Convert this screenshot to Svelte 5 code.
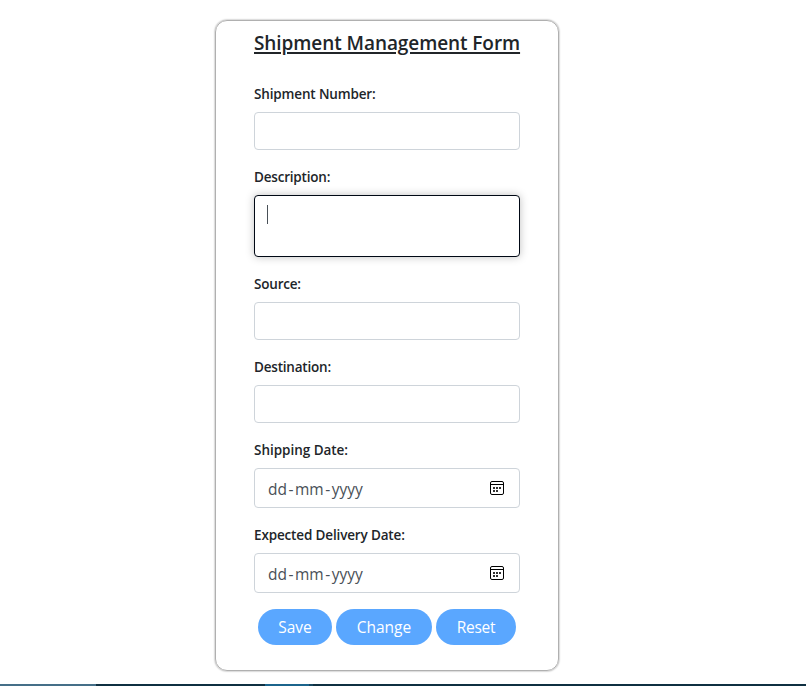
<script>
  const fields = [
    { id: 'number', label: 'Shipment Number:', type: 'text', track: -0.15 },
    { id: 'description', label: 'Description:', type: 'area', track: -0.2 },
    { id: 'source', label: 'Source:', type: 'text', track: -0.2 },
    { id: 'destination', label: 'Destination:', type: 'text', track: -0.2 },
    { id: 'shipping', label: 'Shipping Date:', type: 'date', track: -0.03 },
    { id: 'delivery', label: 'Expected Delivery Date:', type: 'date', track: -0.15 }
  ];
</script>

<div class="page">
  <form class="card">
    <h1>Shipment Management Form</h1>
    {#each fields as f}
      <div class="field">
        <label for={f.id} style="letter-spacing: {f.track}px">{f.label}</label>
        {#if f.type === 'date'}
          <div class="control date" id={f.id}>
            <span class="mask">dd<b>-</b>mm<b>-</b>yyyy</span>
            <svg width="14" height="14" viewBox="0 0 14 14">
              <rect x=".5" y=".5" width="13" height="13" rx="1.5" fill="none" stroke="#000" />
              <path d="M1 3.5H13" stroke="#000" />
              <path d="M3 6h2v2H3zM6 6h2v2H6zM9 6h2v2H9zM3 9h2v2H3zM6 9h2v2H6z" fill="#333" />
            </svg>
          </div>
        {:else if f.type === 'area'}
          <div class="control area" id={f.id}><i class="caret"></i></div>
        {:else}
          <input class="control" id={f.id} type="text" />
        {/if}
      </div>
    {/each}
    <div class="actions">
      <button type="button" class="save">Save</button>
      <button type="button" class="change">Change</button>
      <button type="button" class="reset">Reset</button>
    </div>
  </form>
  <div class="taskbar"><i class="a"></i><i class="b"></i><i class="c"></i><i class="d"></i></div>
</div>

<style>
  .page {
    box-sizing: border-box;
    width: 806px;
    height: 686px;
    padding-top: 20px;
    display: flex;
    flex-direction: column;
    justify-content: space-between;
    overflow: hidden;
    background: #fff;
    color: #212529;
    font-family: "Segoe UI", "Open Sans", "Noto Sans", sans-serif;
  }
  .card {
    box-sizing: border-box;
    width: 344px;
    height: 651px;
    margin-left: 215px;
    padding: 9px 38px 0;
    border: 1px solid #b0b0b0;
    border-radius: 12px;
    box-shadow: 0 0 2px #808080;
  }
  h1 {
    margin: 0 0 28px;
    height: 26px;
    font-size: 19px;
    line-height: 26px;
    font-weight: 600;
    letter-spacing: -0.08px;
    white-space: nowrap;
    text-decoration: underline;
    text-decoration-thickness: 2px;
    text-underline-offset: 2px;
  }
  .field {
    display: flex;
    flex-direction: column;
    align-items: flex-start;
    margin-bottom: 17px;
  }
  .field:last-of-type { margin-bottom: 16px; }
  label {
    height: 28px;
    line-height: 20px;
    font-size: 13.5px;
    font-weight: 600;
    white-space: nowrap;
  }
  .control {
    box-sizing: border-box;
    width: 266px;
    height: 38px;
    border: 1px solid #ced4da;
    border-radius: 4px;
    background: #fff;
    outline: none;
  }
  .area {
    height: 62px;
    padding: 9px 12px;
    border-color: #000814;
    box-shadow: 0 0 8px rgba(0, 0, 0, .25);
  }
  .caret { display: block; width: 1px; height: 19px; background: #495057; }
  .date {
    height: 40px;
    display: flex;
    align-items: center;
    justify-content: space-between;
    padding: 0 15px 0 13px;
    color: #495057;
    font-size: 15.5px;
  }
  .mask { padding-top: 1px; }
  .mask b { padding: 0 1.5px; font-weight: 400; }
  .actions { display: flex; gap: 4px; margin: -1px 0 0 4px; }
  button {
    height: 36px;
    padding: 0;
    border: 0;
    border-radius: 18px;
    background: #5aa7ff;
    color: #fff;
    font: 15.5px "Segoe UI", "Open Sans", "Noto Sans", sans-serif;
  }
  .save { width: 74px; }
  .change { width: 96px; }
  .reset { width: 80px; letter-spacing: -0.3px; }
  .taskbar { display: flex; height: 2px; background: #0f3041; }
  .taskbar i { height: 2px; }
  .a { width: 96px; background: #456f88; }
  .b { width: 169px; }
  .c { width: 44px; background: #1b648c; }
  .d { width: 4px; background: #17465f; }
</style>
